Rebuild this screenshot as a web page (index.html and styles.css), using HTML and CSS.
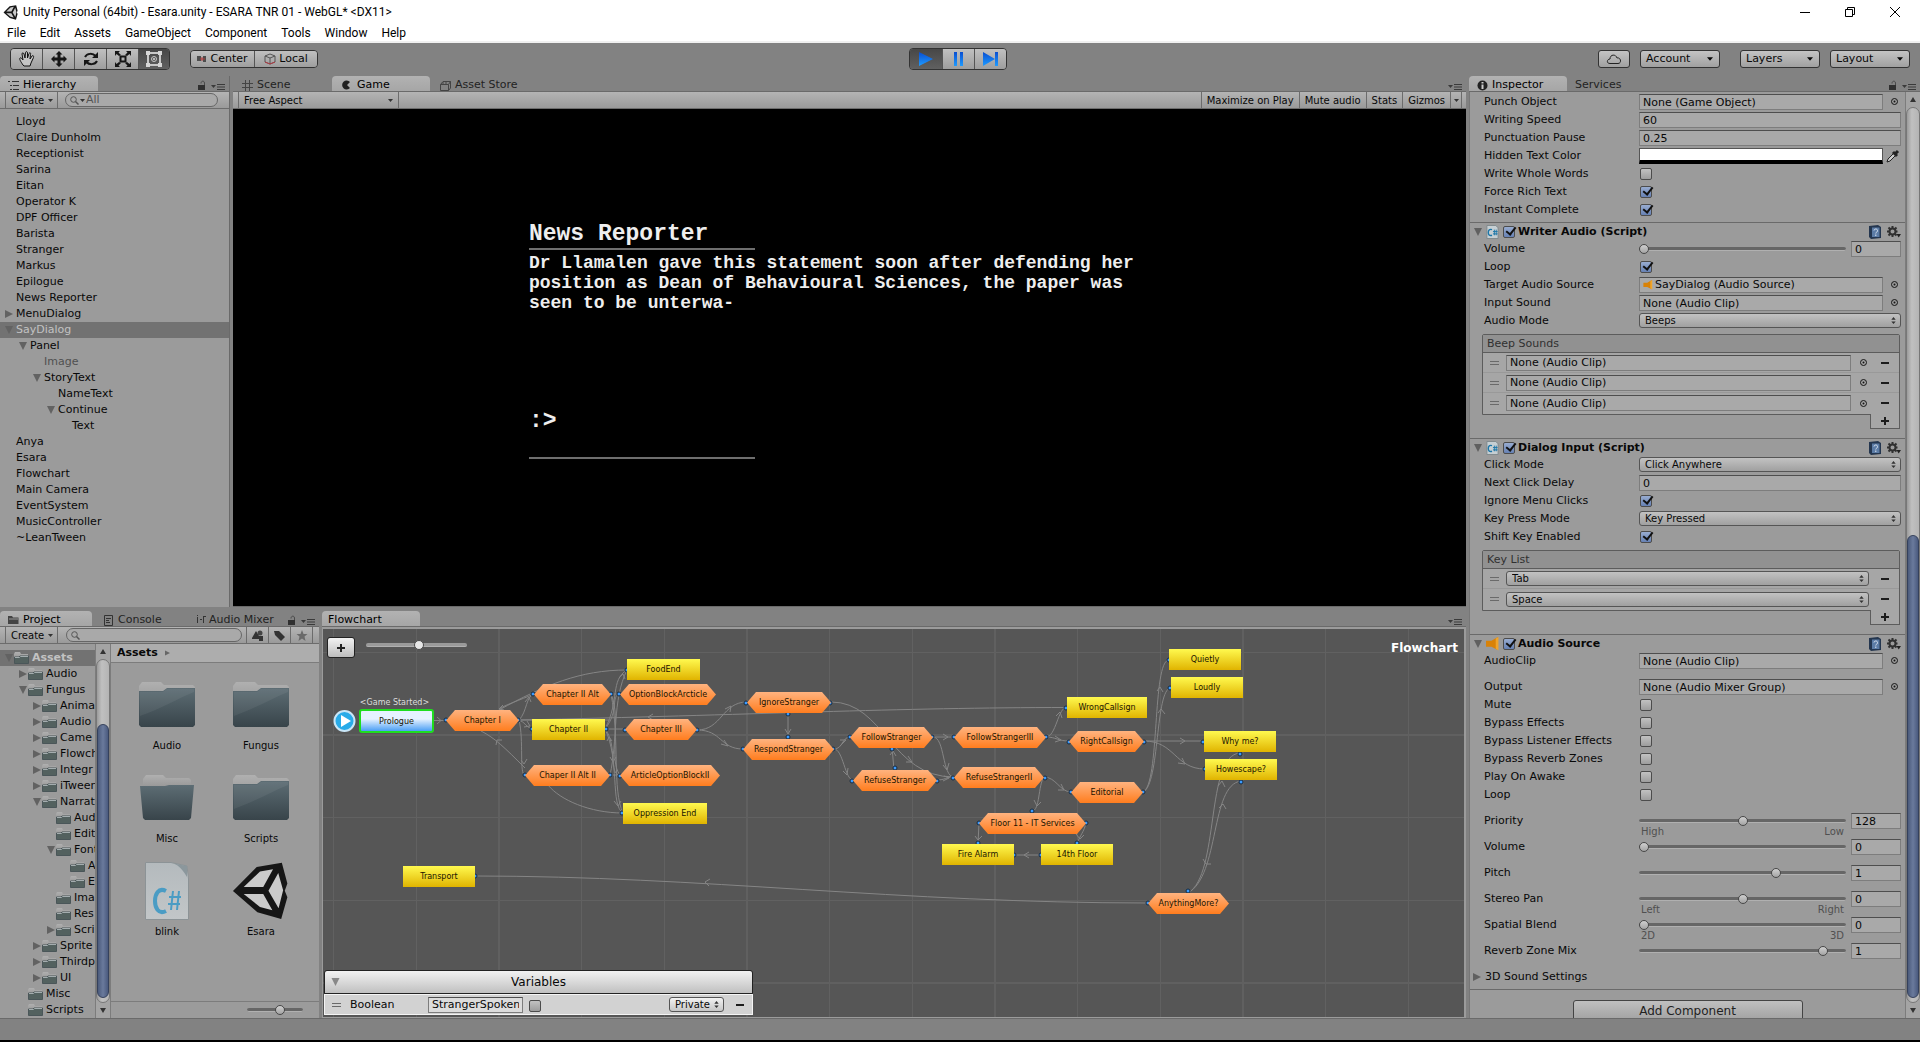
FILE: index.html
```html
<!DOCTYPE html>
<html lang="en">
<head>
<meta charset="utf-8">
<title>Unity Personal (64bit) - Esara.unity - ESARA TNR 01 - WebGL</title>
<link rel="stylesheet" href="styles.css">
</head>
<body>
<svg class="defs" aria-hidden="true">
  <defs>
    <linearGradient id="folderGrad" x1="0" y1="0" x2="0" y2="1"><stop offset="0" stop-color="#5d6d74"/><stop offset="1" stop-color="#38444a"/></linearGradient>
    <linearGradient id="tabGrad" x1="0" y1="0" x2="0" y2="1"><stop offset="0" stop-color="#b0b0b0"/><stop offset="1" stop-color="#858585"/></linearGradient>
    <linearGradient id="blueGrad" x1="0" y1="0" x2="0" y2="1"><stop offset="0" stop-color="#0a4ed0"/><stop offset="1" stop-color="#1e9bff"/></linearGradient>
    <linearGradient id="docGrad" x1="0" y1="0" x2="0" y2="1"><stop offset="0" stop-color="#b4babd"/><stop offset="1" stop-color="#c2c6c8"/></linearGradient>
    <symbol id="down" viewBox="0 0 8 8"><path d="M0 0H8L4 8Z" fill="currentColor"/></symbol>
    <symbol id="right" viewBox="0 0 8 8"><path d="M0 0V8L8 4Z" fill="currentColor"/></symbol>
    <symbol id="caret" viewBox="0 0 5 3"><path d="M0 0H5L2.5 3Z" fill="currentColor"/></symbol>
    <symbol id="updown" viewBox="0 0 5 8"><path d="M0 3H5L2.5 0ZM0 5H5L2.5 8Z" fill="currentColor"/></symbol>
    <symbol id="lock" viewBox="0 0 8 10"><path d="M0 5H7V10H0Z" fill="#303030"/><path d="M3 3.5C3 .5 6.5 .5 6.5 3V5" fill="none" stroke="#4a4a4a"/></symbol>
    <symbol id="panemenu" viewBox="0 0 14 6"><path d="M0 1H5L2.500 4Z" fill="#3a3a3a"/><path d="M6 .5H14M6 3H14M6 5.500H14" stroke="#3a3a3a"/></symbol>
    <symbol id="minifolder" viewBox="0 0 15 12"><path d="M0 11V2L1 0H6L7 2H14V5H0Z" fill="url(#tabGrad)"/><path d="M.5 5H5L6 4H14.500V11.500H.5Z" fill="#53615f" stroke="#4a5659"/><path d="M1 5.500H5.500L6.500 4.500H14" stroke="#a4adaf" fill="none"/></symbol>
    <symbol id="folder" viewBox="0 0 64 64"><path d="M4 48V13L7 9H26L29 12H58L60 14V20H4Z" fill="url(#tabGrad)"/><path d="M4 18H28L32 15H60V52L58 54H6L4 52Z" fill="url(#folderGrad)"/><path d="M5 43V19H28L32 16H59V19C44 25 25 36 5 43Z" fill="#fff" opacity=".06"/></symbol>
    <symbol id="openfolder" viewBox="0 0 64 64"><path d="M8 30V13L11 9H28L31 12H54L56 14V30Z" fill="url(#tabGrad)"/><path d="M5 20H30L34 19H59L56 52L54 54H10L8 52Z" fill="url(#folderGrad)"/></symbol>
    <symbol id="unity" viewBox="692 784 172 178"><path d="M695 873L768 799 845 786 862 850 854 872 862 892 843 959 770 938Z" fill="#161616"/><path d="M728 861L778 813 818 806 788 861ZM728 882H788L816 932 778 922ZM804 872L834 818 849 871 835 926Z" fill="#cbcbcb"/></symbol>
    <symbol id="target" viewBox="0 0 9 9"><circle cx="4.500" cy="4.500" r="3" fill="none" stroke="#151515"/><circle cx="4.500" cy="4.500" r="1" fill="#151515"/></symbol>
    <symbol id="book" viewBox="0 0 13 14"><path d="M1 1L10 0 13 2V13L3 14 1 12Z" fill="#24364f"/><path d="M4 2.500H11.500V12H4Z" fill="#5c7ca6"/><path d="M6 5.500C6 3.500 9.500 3.500 9.500 5.500S7.800 7 7.800 8.500M7.800 9.500V11" stroke="#dce6f2" fill="none"/></symbol>
    <symbol id="gear" viewBox="0 0 14 12"><circle cx="5.500" cy="5.500" r="3" fill="none" stroke="#303030" stroke-width="2"/><path d="M5.500 0V2M5.500 9V11M0 5.500H2M9 5.500H10.500M1.500 1.500L3 3M8 8L9.500 9.500M1.500 9.500L3 8M8 3L9.500 1.500" stroke="#303030" stroke-width="2"/><path d="M9.500 8H14L11.700 11.500Z" fill="#222"/></symbol>
    <symbol id="speaker" viewBox="0 0 12 13"><path d="M0 3.500H5L11 0V12L5 9H0Z" fill="#d98207"/><path d="M9 1.500L11.500 0V12.500L9 11Z" fill="#f0a52c"/></symbol>
    <symbol id="csfile" viewBox="0 0 13 15"><path d="M.5 .5H10L12.500 3V14.500H.5Z" fill="#c6cfd3" stroke="#7d868a"/><path d="M6 5C3 4 2 6 2 8S3 12 6 11" stroke="#1c76a8" stroke-width="1.500" fill="none"/><path d="M8.500 5V11M10.500 5V11M7 7H12M7 9.500H12" stroke="#1c76a8"/></symbol>
    <symbol id="search" viewBox="0 0 9 9"><circle cx="3.500" cy="3.500" r="2.800" fill="none" stroke="#555"/><path d="M5.500 5.500L8.500 8.500" stroke="#555" stroke-width="1.500"/></symbol>
    <pattern id="grid" x="10" y="23" width="248" height="248" patternUnits="userSpaceOnUse"><path d="M.5 0V248M83.500 0V248M0 .5H248M0 165.500H248" stroke="#616161"/><path d="M166 0V248M0 83H248" stroke="#606060" stroke-width="2"/></pattern>
  </defs>
</svg>

<header class="titlebar">
  <svg class="ic15"><use href="#unity"/></svg>
  <h1>Unity Personal (64bit) - Esara.unity - ESARA TNR 01 - WebGL* &lt;DX11&gt;</h1>
  <div class="winbtns">
    <button aria-label="Minimize"><svg width="12" height="12"><path d="M1 6.500H11" stroke="#000"/></svg></button>
    <button aria-label="Restore"><svg width="12" height="12"><path d="M1.500 3.500H8.500V10.500H1.500ZM3.500 3V1.500H10.500V8.500H9" fill="none" stroke="#000"/></svg></button>
    <button aria-label="Close"><svg width="12" height="12"><path d="M1 1L11 11M11 1L1 11" stroke="#000"/></svg></button>
  </div>
</header>
<nav class="menubar">
  <a href="#">File</a><a href="#">Edit</a><a href="#">Assets</a><a href="#">GameObject</a><a href="#">Component</a><a href="#">Tools</a><a href="#">Window</a><a href="#">Help</a>
</nav>

<div class="toolbar">
  <div class="side">
    <div class="group tools">
      <button aria-label="Hand"><svg width="18" height="18"><path d="M5 15C3 12 1 9 2 8S4 9 5 10L4 4C4 2.500 5.500 2.500 6 4L7 8 7.500 2.500C8 1 9.500 1.500 9.500 3V8L11 3.500C12 2 13 3 12.500 4.500L12 9 14 6C15 5 16 6 15.500 7.500L13 13 12 16H6Z" fill="#c4c4c4" stroke="#111"/></svg></button>
      <button aria-label="Move"><svg width="18" height="18"><path d="M9 1L12.500 4.500H10.500V7.500H13.500V5.500L17 9 13.500 12.500V10.500H10.500V13.500H12.500L9 17 5.500 13.500H7.500V10.500H4.500V12.500L1 9 4.500 5.500V7.500H7.500V4.500H5.500Z" fill="#161616"/></svg></button>
      <button aria-label="Rotate"><svg width="18" height="18"><path d="M3 7C5 3 11 3 13.500 6M15 11C13 15 7 15 4.500 12" stroke="#161616" stroke-width="2" fill="none"/><path d="M16 2V8H10ZM2 16V10H8Z" fill="#161616"/></svg></button>
      <button aria-label="Scale"><svg width="18" height="18"><path d="M6.500 6.500H11.500V11.500H6.500Z" fill="none" stroke="#161616" stroke-width="2"/><path d="M1 1H6L4.500 2.500 7 5 5 6 2.500 4 1 6ZM17 1H12L13.500 2.500 11 5 13 6 15.500 4 17 6ZM1 17H6L4.500 15.500 7 13 5 12 2.500 14 1 12ZM17 17H12L13.500 15.500 11 13 13 12 15.500 14 17 12Z" fill="#161616"/></svg></button>
      <button class="on" aria-label="Rect"><svg width="18" height="18"><path d="M3 3H15V15H3Z" fill="none" stroke="#c8c8c8" stroke-width="2"/><path d="M1 1H5V5H1ZM13 1H17V5H13ZM1 13H5V17H1ZM13 13H17V17H13Z" fill="#d6d6d6"/><circle cx="9" cy="9" r="2.500" fill="none" stroke="#c8c8c8"/><circle cx="9" cy="9" r="1" fill="#ddd"/></svg></button>
    </div>
    <div class="group pivot">
      <button><svg width="10" height="8"><path d="M0 1H4V6H0ZM6 1H9V7H6Z" fill="#4d4d4d"/><path d="M3 4H8M5 2V6" stroke="#b03a3a"/></svg>Center</button>
      <button><svg width="12" height="12"><path d="M1 3L6 1 11 3V9L6 11 1 9ZM1 3L6 5 11 3M6 5V11" fill="none" stroke="#555"/><path d="M1 9L6 11 11 9" fill="none" stroke="#b23a44"/></svg>Local</button>
    </div>
  </div>
  <div class="group play">
    <button class="on" aria-label="Play"><svg width="18" height="16"><path d="M2 1L16 8 2 15Z" fill="url(#blueGrad)"/></svg></button>
    <button aria-label="Pause"><svg width="18" height="16"><path d="M4 1H7V15H4ZM10 1H13V15H10Z" fill="url(#blueGrad)"/></svg></button>
    <button aria-label="Step"><svg width="18" height="16"><path d="M1 1L13 8V1H16V15H13V8L1 15Z" fill="url(#blueGrad)"/></svg></button>
  </div>
  <div class="side right">
    <button class="drop cloud" aria-label="Cloud"><svg width="16" height="12"><path d="M4 10.500C0 10.500 1 6 4 6C4 1 10 1 11 5C15 4 16 10.500 12 10.500Z" fill="none" stroke="#222"/></svg></button>
    <button class="drop gap2">Account<svg class="c6"><use href="#caret"/></svg></button>
    <button class="drop">Layers<svg class="c6"><use href="#caret"/></svg></button>
    <button class="drop">Layout<svg class="c6"><use href="#caret"/></svg></button>
  </div>
</div>

<main class="workspace">
  <div class="stage">
    <div class="row top">
      <section class="pane hierarchy">
        <div class="tabs">
          <div class="tab active"><svg class="ti"><path d="M0 1.500H2M4 1.500H11M2 5.500H4M5 5.500H11M2 9.500H4M5 9.500H11" stroke="#333"/></svg>Hierarchy</div>
          <div class="tabend"><svg class="lk"><use href="#lock"/></svg><svg class="pm"><use href="#panemenu"/></svg></div>
        </div>
        <div class="bar">
          <button class="seg create">Create<svg class="c5"><use href="#caret"/></svg></button>
          <label class="find"><svg class="s9"><use href="#search"/></svg><svg class="c5"><use href="#caret"/></svg><input type="text" placeholder="All" aria-label="Search hierarchy"></label>
        </div>
        <ul class="tree">
          <li>Lloyd</li><li>Claire Dunholm</li><li>Receptionist</li><li>Sarina</li><li>Eitan</li><li>Operator K</li><li>DPF Officer</li><li>Barista</li><li>Stranger</li><li>Markus</li><li>Epilogue</li><li>News Reporter</li>
          <li><svg><use href="#right"/></svg>MenuDialog</li>
          <li class="sel"><svg><use href="#down"/></svg>SayDialog</li>
          <li class="l1"><svg><use href="#down"/></svg>Panel</li>
          <li class="l2 off">Image</li>
          <li class="l2"><svg><use href="#down"/></svg>StoryText</li>
          <li class="l3">NameText</li>
          <li class="l3"><svg><use href="#down"/></svg>Continue</li>
          <li class="l4">Text</li>
          <li>Anya</li><li>Esara</li><li>Flowchart</li><li>Main Camera</li><li>EventSystem</li><li>MusicController</li><li>~LeanTween</li>
        </ul>
      </section>

      <section class="pane game">
        <div class="tabs">
          <div class="tab scene"><svg class="ti"><path d="M3.500 0V11M7.500 0V11M0 3.500H11M0 7.500H11" stroke="#444"/></svg>Scene</div>
          <div class="tab active"><svg class="ti"><path d="M8 2A4.500 4.500 0 1 0 8 8L5 5Z" fill="#222"/></svg>Game</div>
          <div class="tab"><svg class="ti"><path d="M.5 4.500H8.500V10.500H.5ZM.5 4.500L3 1.500H10.500V8L8.500 10.500M8.500 4.500L10.500 1.500M3 4V2M6 4V2" fill="none" stroke="#444"/></svg>Asset Store</div>
          <div class="tabend"><svg class="pm"><use href="#panemenu"/></svg></div>
        </div>
        <div class="bar">
          <button class="seg aspect">Free Aspect<svg class="c5"><use href="#caret"/></svg></button>
          <span class="grow"></span>
          <button class="seg">Maximize on Play</button><button class="seg">Mute audio</button><button class="seg">Stats</button><button class="seg">Gizmos</button><button class="seg tiny" aria-label="Gizmo options"><svg class="c5"><use href="#caret"/></svg></button>
        </div>
        <div class="screen">
          <h2>News Reporter</h2>
          <hr>
          <p>Dr Llamalen gave this statement soon after defending her<br>position as Dean of Behavioural Sciences, the paper was<br>seen to be unterwa-</p>
          <div class="prompt">:&gt;</div>
          <hr>
        </div>
      </section>
    </div>

    <div class="row bottom">
      <section class="pane project">
        <div class="tabs">
          <div class="tab active"><svg class="ti"><path d="M0 9V1H4L5 2.500H10.500V9Z" fill="#444"/><path d="M1 4H10" stroke="#999"/></svg>Project</div>
          <div class="tab console"><svg class="ti"><path d="M.5 .5H8.500V10.500H.5ZM2 3.500H7M2 5.500H5M2 7.500H6" fill="none" stroke="#333"/></svg>Console</div>
          <div class="tab mixer"><svg class="ti"><path d="M1.500 3V9M1.500 1V2M4 5.500H6M7.500 3V9M7 2.500H10" stroke="#333" fill="none"/></svg>Audio Mixer</div>
          <div class="tabend"><svg class="lk"><use href="#lock"/></svg><svg class="pm"><use href="#panemenu"/></svg></div>
        </div>
        <div class="bar">
          <button class="seg create">Create<svg class="c5"><use href="#caret"/></svg></button>
          <label class="find wide"><svg class="s9"><use href="#search"/></svg><input type="text" aria-label="Search project"></label>
          <button class="seg pic" aria-label="Filter by type"><svg width="12" height="12"><path d="M0 8L4 1 7 6V9H0ZM7 6H11V11H7Z" fill="#333"/><circle cx="8" cy="3" r="2.500" fill="#444"/></svg></button>
          <button class="seg pic" aria-label="Filter by label"><svg width="12" height="12"><path d="M0 1H5L11 7 7 11 1 5Z" fill="#333"/></svg></button>
          <button class="seg pic" aria-label="Favourites"><svg width="12" height="12"><path d="M6 0L7.500 4H11.500L8.500 6.500 9.500 11 6 8.500 2.500 11 3.500 6.500 .5 4H4.500Z" fill="#6a6a6a"/></svg></button>
        </div>
        <div class="split">
          <ul class="tree files">
            <li class="sel bold"><svg><use href="#down"/></svg><svg class="mf"><use href="#minifolder"/></svg>Assets</li>
            <li class="l1"><svg><use href="#right"/></svg><svg class="mf"><use href="#minifolder"/></svg>Audio</li>
            <li class="l1"><svg><use href="#down"/></svg><svg class="mf"><use href="#minifolder"/></svg>Fungus</li>
            <li class="l2"><svg><use href="#right"/></svg><svg class="mf"><use href="#minifolder"/></svg>Anima</li>
            <li class="l2"><svg><use href="#right"/></svg><svg class="mf"><use href="#minifolder"/></svg>Audio</li>
            <li class="l2"><svg><use href="#right"/></svg><svg class="mf"><use href="#minifolder"/></svg>Came</li>
            <li class="l2"><svg><use href="#right"/></svg><svg class="mf"><use href="#minifolder"/></svg>Flowch</li>
            <li class="l2"><svg><use href="#right"/></svg><svg class="mf"><use href="#minifolder"/></svg>Integr</li>
            <li class="l2"><svg><use href="#right"/></svg><svg class="mf"><use href="#minifolder"/></svg>iTween</li>
            <li class="l2"><svg><use href="#down"/></svg><svg class="mf"><use href="#minifolder"/></svg>Narrat</li>
            <li class="l3"><svg class="mf"><use href="#minifolder"/></svg>Aud</li>
            <li class="l3"><svg class="mf"><use href="#minifolder"/></svg>Edit</li>
            <li class="l3"><svg><use href="#down"/></svg><svg class="mf"><use href="#minifolder"/></svg>Font</li>
            <li class="l4"><svg class="mf"><use href="#minifolder"/></svg>A</li>
            <li class="l4"><svg class="mf"><use href="#minifolder"/></svg>E</li>
            <li class="l3"><svg class="mf"><use href="#minifolder"/></svg>Ima</li>
            <li class="l3"><svg class="mf"><use href="#minifolder"/></svg>Res</li>
            <li class="l3"><svg><use href="#right"/></svg><svg class="mf"><use href="#minifolder"/></svg>Scri</li>
            <li class="l2"><svg><use href="#right"/></svg><svg class="mf"><use href="#minifolder"/></svg>Sprite</li>
            <li class="l2"><svg><use href="#right"/></svg><svg class="mf"><use href="#minifolder"/></svg>Thirdp</li>
            <li class="l2"><svg><use href="#right"/></svg><svg class="mf"><use href="#minifolder"/></svg>UI</li>
            <li class="l1"><svg class="mf"><use href="#minifolder"/></svg>Misc</li>
            <li class="l1"><svg class="mf"><use href="#minifolder"/></svg>Scripts</li>
          </ul>
          <div class="scroll projscroll"><i class="arrow up"></i><div class="track"><div class="thumb"></div></div><i class="arrow"></i></div>
          <div class="browser">
            <div class="crumb">Assets<svg><use href="#right"/></svg></div>
            <div class="assets">
              <figure><svg><use href="#folder"/></svg><figcaption>Audio</figcaption></figure>
              <figure><svg><use href="#folder"/></svg><figcaption>Fungus</figcaption></figure>
              <figure><svg><use href="#openfolder"/></svg><figcaption>Misc</figcaption></figure>
              <figure><svg><use href="#folder"/></svg><figcaption>Scripts</figcaption></figure>
              <figure><svg viewBox="0 0 64 64"><path d="M10.500 3.500H36L52 7L53.500 20V60.500H10.500Z" fill="url(#docGrad)" stroke="#8c9396"/><path d="M36 4C42 5 46 8 52 18V7Z" fill="#8b979c"/><path d="M31 32C23 28 20 36 20 42S23 56 31 52" fill="none" stroke="#4a9cc4" stroke-width="4"/><path d="M38 32L36 51M44 32L42 51M34 38H46M33 45H45" stroke="#4a9cc4" stroke-width="2"/></svg><figcaption>blink</figcaption></figure>
              <figure><svg viewBox="-2 -3 64 64"><use href="#unity" width="58" height="58"/></svg><figcaption>Esara</figcaption></figure>
            </div>
            <div class="foot"><input type="range" aria-label="Icon size" value="60"></div>
          </div>
        </div>
      </section>

      <section class="pane flow">
        <div class="tabs">
          <div class="tab active">Flowchart</div>
          <div class="tabend"><svg class="pm"><use href="#panemenu"/></svg></div>
        </div>
        <div class="canvas">
          <svg class="wires">
            <rect width="100%" height="100%" fill="url(#grid)"/>
            <g transform="translate(-323 -629)" fill="none" stroke="#858585">
              <path d="M434 720.500H446M627 670C580 670 545 685 499 710M534 694C520 700 505 705 499 709M525 768C505 748 495 738 481 731M623 813C590 813 560 800 548 785M519 720C525 722 527 728 532 729M519 720C527 712 526 696 534 694M519 720C524 740 519 775 525 775M519 720H610M605 729H625M605 729C620 700 610 680 627 670M605 729C620 710 610 696 620 694M605 729C618 745 608 775 620 775M605 729C620 760 610 805 623 813M611 694H620M611 694C622 720 608 760 620 775M610 775H620M610 775C618 740 612 700 627 670M611 694C620 740 612 790 623 813M697 730C722 730 722 702 747 702M697 730C722 730 720 749 743 749M1067 707.500C900 707.500 750 715 519 720"/>
              <path d="M788 713V739M831 702C885 702 890 777 954 777M834 749C843 749 842 737 850 737M834 749C843 749 845 780 853 780M894 770L892 747M933 737H954M933 737C945 737 942 777 954 777M937 780C945 780 946 777 954 777M1046 737C1056 737 1058 707 1067 707M1046 737C1056 737 1058 741 1069 741M1044 777C1056 777 1060 792 1071 792M1044 777C1038 785 1040 811 1032 811M979 823L978 844M1086 823C1084 832 1080 835 1077 844M1041 855H1014"/>
              <path d="M1144 741H1204M1144 741C1175 741 1175 769 1205 769M1143 792C1160 785 1152 660 1169 660M1143 792C1160 785 1155 688 1171 688M1188 893C1220 875 1205 755 1240 753M1188 893C1220 875 1210 785 1241 781M1148 903C900 903 700 876 475 876"/>
              <path d="M437 717L441 720.500 437 724M503 705L499 709 504 710M496 745L497 740 502 740M525 702L529 697 531 702M524 727L530 726 527 721M521 760L524 764 527 759M607 741L609 737 612 741M610 757L613 762 616 757M619 678L623 674 625 679M614 801L618 806 621 801M653 714L648 717 653 720M725 709L731 706 730 712M721 744L728 746 724 740M785 729L788 734 791 729M840 746L846 740 840 740M843 771L847 775 848 768M908 756L912 762 906 762M890 755L893 751 896 756M943 734L948 737 943 740M943 765L947 770 949 763M943 781L949 778 944 776M1056 716L1060 712 1062 718M1055 736L1061 740 1055 742M1058 790L1064 790 1061 784M1034 800L1037 806 1041 802M975 836L978 840 982 836M1076 834L1080 839 1084 835M1029 852L1024 855 1029 858M1180 738L1185 741 1180 744M1178 763L1185 764 1182 758M1157 691L1160 687 1163 692M1158 713L1161 709 1165 714M1218 786L1222 781 1225 787M1219 808L1223 804 1226 809M1203 859L1206 864 1211 864M710 879L705 882 709 886"/>
            </g>
            <g transform="translate(-323 -629)">
              <g fill="#3a9bff" stroke="#17293d">
                <circle cx="446" cy="720" r="2"/><circle cx="518" cy="720" r="2"/><circle cx="533" cy="694" r="2"/><circle cx="611" cy="694" r="2"/><circle cx="619" cy="694" r="2"/><circle cx="627" cy="670" r="2"/><circle cx="532" cy="729" r="2"/><circle cx="606" cy="729" r="2"/><circle cx="625" cy="730" r="2"/><circle cx="697" cy="730" r="2"/><circle cx="525" cy="775" r="2"/><circle cx="610" cy="775" r="2"/><circle cx="620" cy="776" r="2"/><circle cx="622" cy="813" r="2"/><circle cx="475" cy="876" r="2"/><circle cx="746" cy="703" r="2"/><circle cx="830" cy="703" r="2"/><circle cx="788" cy="714" r="2"/><circle cx="788" cy="737" r="2"/><circle cx="743" cy="749" r="2"/><circle cx="833" cy="749" r="2"/><circle cx="850" cy="737" r="2"/><circle cx="932" cy="737" r="2"/><circle cx="892" cy="749" r="2"/><circle cx="895" cy="768" r="2"/><circle cx="852" cy="781" r="2"/><circle cx="937" cy="781" r="2"/><circle cx="954" cy="737" r="2"/><circle cx="1046" cy="737" r="2"/><circle cx="953" cy="778" r="2"/><circle cx="1045" cy="778" r="2"/><circle cx="1032" cy="811" r="2"/><circle cx="979" cy="823" r="2"/><circle cx="1086" cy="823" r="2"/><circle cx="978" cy="843" r="2"/><circle cx="1077" cy="843" r="2"/><circle cx="1014" cy="855" r="2"/><circle cx="1041" cy="855" r="2"/><circle cx="1066" cy="708" r="2"/><circle cx="1069" cy="742" r="2"/><circle cx="1144" cy="742" r="2"/><circle cx="1071" cy="792" r="2"/><circle cx="1143" cy="792" r="2"/><circle cx="1169" cy="660" r="2"/><circle cx="1170" cy="688" r="2"/><circle cx="1203" cy="742" r="2"/><circle cx="1205" cy="769" r="2"/><circle cx="1240" cy="754" r="2"/><circle cx="1241" cy="782" r="2"/><circle cx="1188" cy="891" r="2"/><circle cx="1148" cy="903" r="2"/>
              </g>
              <circle cx="344.500" cy="721" r="10" fill="#29abe8" stroke="#c9e6f7" stroke-width="2"/><path d="M341 715L351 721 341 727Z" fill="#fff"/>
            </g>
          </svg>
          <span class="event" style="left:36px;top:69px;width:71px">&lt;Game Started&gt;</span>
          <div class="node start" style="left:36px;top:80px;width:75px">Prologue</div>
          <div class="node hex" style="left:123px;top:81px;width:73px">Chapter I</div>
          <div class="node hex" style="left:211px;top:55px;width:77px">Chapter II Alt</div>
          <div class="node" style="left:304px;top:30px;width:73px">FoodEnd</div>
          <div class="node hex" style="left:297px;top:55px;width:96px">OptionBlockArcticle</div>
          <div class="node" style="left:209px;top:90px;width:73px">Chapter II</div>
          <div class="node hex" style="left:302px;top:90px;width:72px">Chapter III</div>
          <div class="node hex" style="left:202px;top:136px;width:85px">Chaper II Alt II</div>
          <div class="node hex" style="left:297px;top:136px;width:100px">ArticleOptionBlockII</div>
          <div class="node" style="left:300px;top:174px;width:84px">Oppression End</div>
          <div class="node" style="left:80px;top:237px;width:72px">Transport</div>
          <div class="node hex" style="left:424px;top:63px;width:84px">IgnoreStranger</div>
          <div class="node hex" style="left:420px;top:110px;width:91px">RespondStranger</div>
          <div class="node hex" style="left:527px;top:98px;width:83px">FollowStranger</div>
          <div class="node hex" style="left:530px;top:141px;width:84px">RefuseStranger</div>
          <div class="node hex" style="left:631px;top:98px;width:92px">FollowStrangerIII</div>
          <div class="node hex" style="left:631px;top:138px;width:90px">RefuseStrangerII</div>
          <div class="node hex" style="left:656px;top:184px;width:107px">Floor 11 - IT Services</div>
          <div class="node" style="left:619px;top:215px;width:72px">Fire Alarm</div>
          <div class="node" style="left:718px;top:215px;width:72px">14th Floor</div>
          <div class="node" style="left:744px;top:68px;width:80px">WrongCallsign</div>
          <div class="node hex" style="left:746px;top:102px;width:75px">RightCallsign</div>
          <div class="node hex" style="left:748px;top:153px;width:72px">Editorial</div>
          <div class="node" style="left:846px;top:20px;width:72px">Quietly</div>
          <div class="node" style="left:848px;top:48px;width:72px">Loudly</div>
          <div class="node" style="left:881px;top:102px;width:72px">Why me?</div>
          <div class="node" style="left:882px;top:130px;width:72px">Howescape?</div>
          <div class="node hex" style="left:825px;top:264px;width:81px">AnythingMore?</div>
          <div class="controls">
            <button class="add" aria-label="Add block"><svg width="10" height="10"><path d="M5 1V9M1 5H9" stroke="#222" stroke-width="2"/></svg></button>
            <input type="range" aria-label="Zoom" value="53">
            <strong>Flowchart</strong>
          </div>
          <div class="vars">
            <div class="varhead"><svg><use href="#down"/></svg>Variables</div>
            <div class="varrow"><i class="grip"></i><label for="vn">Boolean</label><input id="vn" class="field" type="text" value="StrangerSpoken"><input type="checkbox" aria-label="StrangerSpoken value"><span class="pick"><select aria-label="Scope"><option>Private</option></select><svg><use href="#updown"/></svg></span><button class="minus" aria-label="Remove variable"></button></div>
          </div>
        </div>
      </section>
    </div>
  </div>

  <section class="pane inspector">
    <div class="tabs">
      <div class="tab active"><svg class="ti"><circle cx="5.500" cy="5.500" r="5" fill="#222"/><path d="M5.500 4.500V9M5.500 2V3.500" stroke="#ccc" stroke-width="2"/></svg>Inspector</div>
      <div class="tab">Services</div>
      <div class="tabend"><svg class="lk"><use href="#lock"/></svg><svg class="pm"><use href="#panemenu"/></svg></div>
    </div>
    <div class="insbody">
      <div class="props">
        <div class="comp">
          <div class="prop"><label for="p1">Punch Object</label><input id="p1" class="field" type="text" value="None (Game Object)"><svg class="tg"><use href="#target"/></svg></div>
          <div class="prop"><label for="p2">Writing Speed</label><input id="p2" class="field" type="text" value="60"></div>
          <div class="prop"><label for="p3">Punctuation Pause</label><input id="p3" class="field" type="text" value="0.25"></div>
          <div class="prop"><label for="p4">Hidden Text Color</label><button id="p4" class="swatch" aria-label="Hidden Text Color"></button><svg class="dropper"><path d="M1 13L2 10 8 4 10 6 4 12Z" fill="#ccc" stroke="#222"/><path d="M7 3L11 7M9 5L12 2" stroke="#222" stroke-width="3"/></svg></div>
          <div class="prop"><label for="p5">Write Whole Words</label><input id="p5" type="checkbox"></div>
          <div class="prop"><label for="p6">Force Rich Text</label><input id="p6" type="checkbox" checked></div>
          <div class="prop"><label for="p7">Instant Complete</label><input id="p7" type="checkbox" checked></div>
        </div>
        <div class="comp">
          <div class="head"><svg class="tri"><use href="#down"/></svg><svg class="hi"><use href="#csfile"/></svg><input id="c1" type="checkbox" checked><label for="c1">Writer Audio (Script)</label><svg class="bk"><use href="#book"/></svg><svg class="gr"><use href="#gear"/></svg></div>
          <div class="prop"><label for="w1">Volume</label><input type="range" id="w1" value="0"><input class="field num" type="text" value="0" aria-label="Volume value"></div>
          <div class="prop"><label for="w2">Loop</label><input id="w2" type="checkbox" checked></div>
          <div class="prop"><label for="w3">Target Audio Source</label><span class="field obj"><svg><use href="#speaker"/></svg><input id="w3" type="text" value="SayDialog (Audio Source)"></span><svg class="tg"><use href="#target"/></svg></div>
          <div class="prop"><label for="w4">Input Sound</label><input id="w4" class="field" type="text" value="None (Audio Clip)"><svg class="tg"><use href="#target"/></svg></div>
          <div class="prop"><label for="w5">Audio Mode</label><span class="pick"><select id="w5"><option>Beeps</option></select><svg><use href="#updown"/></svg></span></div>
          <div class="list">
            <h3>Beep Sounds</h3>
            <div class="item"><i class="grip"></i><input class="field" type="text" value="None (Audio Clip)" aria-label="Beep 1"><svg class="tg"><use href="#target"/></svg><button class="minus" aria-label="Remove"></button></div>
            <div class="item"><i class="grip"></i><input class="field" type="text" value="None (Audio Clip)" aria-label="Beep 2"><svg class="tg"><use href="#target"/></svg><button class="minus" aria-label="Remove"></button></div>
            <div class="item"><i class="grip"></i><input class="field" type="text" value="None (Audio Clip)" aria-label="Beep 3"><svg class="tg"><use href="#target"/></svg><button class="minus" aria-label="Remove"></button></div>
          </div>
          <button class="plus" aria-label="Add beep sound"></button>
        </div>
        <div class="comp">
          <div class="head"><svg class="tri"><use href="#down"/></svg><svg class="hi"><use href="#csfile"/></svg><input id="c2" type="checkbox" checked><label for="c2">Dialog Input (Script)</label><svg class="bk"><use href="#book"/></svg><svg class="gr"><use href="#gear"/></svg></div>
          <div class="prop"><label for="d1">Click Mode</label><span class="pick"><select id="d1"><option>Click Anywhere</option></select><svg><use href="#updown"/></svg></span></div>
          <div class="prop"><label for="d2">Next Click Delay</label><input id="d2" class="field" type="text" value="0"></div>
          <div class="prop"><label for="d3">Ignore Menu Clicks</label><input id="d3" type="checkbox" checked></div>
          <div class="prop"><label for="d4">Key Press Mode</label><span class="pick"><select id="d4"><option>Key Pressed</option></select><svg><use href="#updown"/></svg></span></div>
          <div class="prop"><label for="d5">Shift Key Enabled</label><input id="d5" type="checkbox" checked></div>
          <div class="list">
            <h3>Key List</h3>
            <div class="item"><i class="grip"></i><span class="pick"><select aria-label="Key 1"><option>Tab</option></select><svg><use href="#updown"/></svg></span><button class="minus" aria-label="Remove"></button></div>
            <div class="item"><i class="grip"></i><span class="pick"><select aria-label="Key 2"><option>Space</option></select><svg><use href="#updown"/></svg></span><button class="minus" aria-label="Remove"></button></div>
          </div>
          <button class="plus" aria-label="Add key"></button>
        </div>
        <div class="comp">
          <div class="head"><svg class="tri"><use href="#down"/></svg><svg class="hi"><use href="#speaker"/></svg><input id="c3" type="checkbox" checked><label for="c3">Audio Source</label><svg class="bk"><use href="#book"/></svg><svg class="gr"><use href="#gear"/></svg></div>
          <div class="prop tall"><label for="a1">AudioClip</label><input id="a1" class="field" type="text" value="None (Audio Clip)"><svg class="tg"><use href="#target"/></svg></div>
          <div class="prop"><label for="a2">Output</label><input id="a2" class="field" type="text" value="None (Audio Mixer Group)"><svg class="tg"><use href="#target"/></svg></div>
          <div class="prop"><label for="a3">Mute</label><input id="a3" type="checkbox"></div>
          <div class="prop"><label for="a4">Bypass Effects</label><input id="a4" type="checkbox"></div>
          <div class="prop"><label for="a5">Bypass Listener Effects</label><input id="a5" type="checkbox"></div>
          <div class="prop"><label for="a6">Bypass Reverb Zones</label><input id="a6" type="checkbox"></div>
          <div class="prop"><label for="a7">Play On Awake</label><input id="a7" type="checkbox"></div>
          <div class="prop tall"><label for="a8">Loop</label><input id="a8" type="checkbox"></div>
          <div class="prop tall"><label for="s1">Priority</label><input type="range" id="s1" value="50"><input class="field num" type="text" value="128" aria-label="Priority value"><div class="ends"><span>High</span><span>Low</span></div></div>
          <div class="prop tall"><label for="s2">Volume</label><input type="range" id="s2" value="0"><input class="field num" type="text" value="0" aria-label="Volume value"></div>
          <div class="prop tall"><label for="s3">Pitch</label><input type="range" id="s3" value="67"><input class="field num" type="text" value="1" aria-label="Pitch value"></div>
          <div class="prop tall"><label for="s4">Stereo Pan</label><input type="range" id="s4" value="50"><input class="field num" type="text" value="0" aria-label="Stereo pan value"><div class="ends"><span>Left</span><span>Right</span></div></div>
          <div class="prop tall"><label for="s5">Spatial Blend</label><input type="range" id="s5" value="0"><input class="field num" type="text" value="0" aria-label="Spatial blend value"><div class="ends"><span>2D</span><span>3D</span></div></div>
          <div class="prop tall"><label for="s6">Reverb Zone Mix</label><input type="range" id="s6" value="91"><input class="field num" type="text" value="1" aria-label="Reverb zone mix value"></div>
          <div class="fold"><svg class="tri"><use href="#right"/></svg>3D Sound Settings</div>
        </div>
        <div class="addcomp"><button>Add Component</button></div>
      </div>
      <div class="scroll insscroll"><i class="arrow up"></i><div class="track"><div class="thumb"></div></div><i class="arrow"></i></div>
    </div>
  </section>
</main>
<footer class="status"></footer>
</body>
</html>
```
FILE: styles.css
```css
* { box-sizing: border-box; }

body {
  margin: 0;
  height: 100vh;
  display: flex;
  flex-direction: column;
  overflow: hidden;
  background: #828282;
  color: #080808;
  font: 11px/16px "DejaVu Sans", sans-serif;
}

button, input, select { font: inherit; color: inherit; margin: 0; padding: 0; border: 0; background: none; }
input { min-width: 0; }
h1, h2, h3, p, ul, figure, hr { margin: 0; padding: 0; }
svg { flex: none; display: block; }
.defs { position: absolute; width: 0; height: 0; }

/* window chrome */
.titlebar {
  display: flex;
  align-items: center;
  height: 24px;
  padding: 0 3px;
  gap: 5px;
  background: #fff;
  color: #000;
}
.titlebar h1 { flex: 1; font: 12px/24px Roboto, sans-serif; }
.ic15 { width: 15px; height: 15px; }
.winbtns { display: flex; }
.winbtns button { width: 45px; height: 20px; display: flex; align-items: center; justify-content: center; }
.menubar {
  display: flex;
  gap: 14px;
  height: 19px;
  padding-left: 7px;
  background: #fff;
  border-bottom: 2px solid #f0f0f0;
  font: 12px/18px Roboto, sans-serif;
}
.menubar a { color: #000; text-decoration: none; }

/* main toolbar */
.toolbar { display: flex; align-items: center; height: 33px; padding: 0 10px 1px; flex: none; }
.side { flex: 1; display: flex; align-items: center; gap: 20px; }
.side.right { justify-content: flex-end; gap: 10px; }
.group { display: flex; border: 1px solid #333; border-radius: 4px; overflow: hidden; }
.play { margin-right: 4px; }
.group button {
  display: flex;
  align-items: center;
  justify-content: center;
  gap: 3px;
  width: 32px;
  height: 20px;
  background: linear-gradient(#c0c0c0, #9e9e9e);
}
.group button + button { border-left: 1px solid #555; }
.group button.on { background: linear-gradient(#474747, #606060); }
.tools button:first-child { width: 31px; }
.tools button:last-child { width: 31px; }
.pivot button { width: 63px; height: 16px; }
.drop {
  display: flex;
  align-items: center;
  justify-content: space-between;
  width: 80px;
  height: 18px;
  padding: 0 6px 0 5px;
  border: 1px solid #333;
  border-radius: 3px;
  background: linear-gradient(#c4c4c4, #a0a0a0);
}
.cloud { width: 32px; padding: 0 7px; }
.gap2 { margin-right: 10px; }
.c6 { width: 6px; height: 4px; }
.c5 { width: 5px; height: 3px; color: #333; }
.s9 { width: 9px; height: 9px; }

/* pane layout */
.workspace { flex: 1; min-height: 0; display: flex; gap: 3px; }
.stage { flex: 1; min-width: 0; display: flex; flex-direction: column; gap: 4px; }
.row { display: flex; min-height: 0; }
.top { flex: 1; gap: 3px; }
.bottom { height: 407px; gap: 3px; }
.pane { display: flex; flex-direction: column; min-width: 0; min-height: 0; }
.hierarchy { width: 230px; border-right: 1px solid #6a6a6a; }
.game, .flow { flex: 1; }
.project { width: 319px; }
.inspector { width: 451px; }

.tabs { display: flex; height: 16px; flex: none; color: #222; border-bottom: 1px solid #6a6a6a; }
.tab { display: flex; align-items: center; gap: 4px; padding: 3px 8px 0; white-space: nowrap; }
.tab.active {
  width: 98px;
  background: linear-gradient(#b2b2b2, #a6a6a6);
  border-radius: 4px 4px 0 0;
  color: #000;
}
.game .tab { padding-left: 10px; }
.game .scene { width: 99px; padding-left: 9px; }
.project .tab.active { width: 92px; }
.console { padding-left: 12px; width: 98px; gap: 3px; }
.mixer { padding: 2px 4px 0 6px; gap: 2px; }
.flow .tab.active { padding: 2px 0 0 6px; }
.ti { width: 11px; height: 11px; }
.tabend { margin-left: auto; display: flex; align-items: flex-end; gap: 5px; padding: 0 4px 1px 0; }
.lk { width: 8px; height: 10px; }
.pm { width: 14px; height: 6px; }

.bar {
  display: flex;
  height: 17px;
  flex: none;
  padding: 0 0 0 5px;
  background: linear-gradient(#b4b4b4, #9a9a9a);
  border-bottom: 1px solid #6c6c6c;
  font-size: 10px;
}
.seg {
  display: flex;
  align-items: center;
  gap: 4px;
  padding: 1px 5px 0;
  border-left: 1px solid #6c6c6c;
  white-space: nowrap;
}
.create { width: 53px; border-right: 1px solid #6c6c6c; }
.aspect { width: 161px; justify-content: space-between; border-right: 1px solid #6c6c6c; }
.tiny { width: 12px; padding: 0 3px; margin-right: 4px; border-right: 1px solid #6c6c6c; }
.grow { flex: 1; }
.pic { width: 22px; justify-content: center; }
.pic:last-child { width: 23px; border-right: 1px solid #6c6c6c; margin-right: 6px; }
.find {
  display: flex;
  align-items: center;
  gap: 1px;
  width: 153px;
  height: 14px;
  margin: 1px 0 0 7px;
  padding: 0 4px;
  border: 1px solid #666;
  border-radius: 7px;
  background: #a9a9a9;
}
.find input { flex: 1; font-size: 11px; height: 12px; }
.find input::placeholder { color: #555; opacity: 1; }
.find.wide { flex: 1; width: auto; margin: 1px 4px 0 8px; }

/* trees */
.tree {
  flex: 1;
  list-style: none;
  padding-top: 5px;
  background: #9b9b9b;
  overflow: hidden;
  white-space: nowrap;
}
.tree li { display: flex; align-items: center; height: 16px; padding-left: 16px; }
.tree li > svg:first-child:not(.mf) { width: 8px; height: 8px; margin: 0 3px 0 -11px; color: #626262; }
.tree .sel { background: #727272; color: #c2c2c2; }
.tree .sel > svg:first-child { color: #444; }
.tree .off { color: #505050; }
.tree .bold { font-weight: bold; }
.tree .l1 { padding-left: 30px; }
.tree .l2 { padding-left: 44px; }
.tree .l3 { padding-left: 58px; }
.tree .l4 { padding-left: 72px; }
.mf { width: 15px; height: 12px; margin: 0 3px 0 -2px; }
.files { flex: none; width: 95px; padding-top: 6px; }

/* scrollbars */
.scroll { display: flex; flex-direction: column; width: 15px; background: #a4a4a4; border-left: 1px solid #7c7c7c; }
.arrow { height: 15px; display: flex; align-items: center; justify-content: center; }
.arrow::before { content: ""; border: 3px solid transparent; border-top: 5px solid #333; border-bottom: 0; }
.arrow.up::before { border-top: 0; border-bottom: 5px solid #333; }
.track { flex: 1; display: flex; align-items: flex-end; padding-bottom: 4px; border: 1px solid #777; border-radius: 7px; background: linear-gradient(90deg, #9b9b9b, #c0c0c0 40%, #b4b4b4); }
.thumb { width: 100%; border-radius: 6px; background: linear-gradient(90deg, #4b5b7c, #6a7a9c 50%, #4a5a7e); border: 1px solid #35415c; }
.projscroll .thumb { height: 81%; }
.insscroll .thumb { height: 52%; }

/* game view */
.screen {
  flex: 1;
  padding: 112px 0 0 24%;
  background: #000;
  color: #eee;
  font: bold 18px/20px "Liberation Mono", monospace;
}
.game { border-bottom: 1px solid #6a6a6a; }
.screen h2 { font-size: 23px; line-height: 26px; }
.screen hr { width: 226px; height: 2px; border: 0; background: #6e6e6e; }
.screen h2 + hr { margin: 1px 0 3px; }
.prompt { margin: 94px 0 22px; font-size: 23px; line-height: 28px; }

/* project browser */
.split { flex: 1; display: flex; min-height: 0; }
.browser { flex: 1; display: flex; flex-direction: column; background: #9b9b9b; border-left: 1px solid #7c7c7c; }
.crumb { display: flex; align-items: center; gap: 7px; height: 19px; padding-left: 6px; background: #adadad; border-bottom: 1px solid #7c7c7c; font-weight: bold; }
.crumb svg { width: 5px; height: 6px; color: #666; }
.assets { flex: 1; display: grid; grid-template-columns: 64px 64px; align-content: start; gap: 12px 30px; padding: 10px 0 0 24px; font-size: 10px; line-height: 18px; }
.assets figure { height: 81px; text-align: center; }
.assets svg { width: 64px; height: 64px; }
.foot { height: 17px; padding: 0 16px; display: flex; justify-content: flex-end; align-items: center; border-top: 1px solid #7c7c7c; }

/* flowchart */
.canvas { position: relative; flex: 1; background: #565656; border: solid #9b9b9b; border-width: 2px 2px 1px 1px; overflow: hidden; }
.wires { position: absolute; inset: 0; width: 100%; height: 100%; }
.node {
  position: absolute;
  height: 21px;
  background: linear-gradient(#fff94f, #e0b400);
  color: #1a1400;
  font-size: 8px;
  line-height: 21px;
  text-align: center;
  white-space: nowrap;
}
.node.hex { background: linear-gradient(#ffb37f, #ff7d1e); clip-path: polygon(0 50%, 9px 0, calc(100% - 9px) 0, 100% 50%, calc(100% - 9px) 100%, 9px 100%); }
.node.start { height: 24px; border: 2px solid #1fdd1f; border-radius: 3px; background: linear-gradient(#e6f2ff 40%, #4b9ff5); }
.event { position: absolute; font-size: 8px; line-height: 10px; text-align: center; color: #ddd; white-space: nowrap; }
.controls { position: relative; display: flex; align-items: center; gap: 11px; padding: 8px 6px 0 4px; }
.controls strong { margin-left: auto; color: #fff; font-size: 12px; }
.add { width: 28px; height: 21px; display: flex; align-items: center; justify-content: center; border: 1px solid #222; border-radius: 3px; background: linear-gradient(#f2f2f2, #bdbdbd); }
.vars { position: absolute; left: 1px; bottom: 2px; width: 429px; }
.varhead { display: flex; align-items: center; justify-content: center; height: 24px; border: 1px solid #222; border-radius: 3px 3px 0 0; background: linear-gradient(#f2f2f2, #c0c0c0); font-size: 12px; position: relative; }
.varhead svg { position: absolute; left: 6px; width: 9px; height: 8px; color: #888; }
.varrow { display: flex; align-items: center; height: 21px; padding: 0 8px 0 7px; background: #d2d2d2; border: 1px solid #f4f4f4; }
.varrow label { width: 78px; margin-left: 2px; }
.varrow .field { flex: none; width: 95px; background: #dcdcdc; }
.varrow input[type=checkbox] { margin-left: 6px; }
.varrow .pick { flex: none; width: 55px; margin-left: auto; }
.varrow .minus { margin-left: 12px; }

/* inspector */
.insbody { flex: 1; display: flex; min-height: 0; }
.props { flex: 1; min-width: 0; background: #9b9b9b; border-left: 1px solid #777; overflow: hidden; display: flex; flex-direction: column; }
.comp { flex: none; padding: 0 4px 9px 14px; border-bottom: 1px solid #6a6a6a; }
.comp:first-child { padding: 2px 4px 2px 14px; }
.prop { position: relative; display: flex; height: 18px; align-items: flex-start; }
.prop.tall { height: 26px; }
.prop label { width: 155px; flex: none; white-space: nowrap; }
.field {
  flex: 1;
  min-width: 0;
  height: 16px;
  padding: 0 3px;
  background: #a9a9a9;
  border: 1px solid #7d7d7d;
  border-top-color: #4e4e4e;
  line-height: 14px;
}
.field.num { flex: none; width: 50px; }
.obj { display: flex; align-items: center; gap: 2px; }
.obj svg { width: 10px; height: 10px; }
.obj input { flex: 1; }
.tg { width: 9px; height: 9px; margin: 3px 2px 0 7px; }
.swatch { flex: 1; height: 16px; background: #fff; border: 1px solid #555; border-bottom: 4px solid #000; }
.dropper { width: 14px; height: 14px; margin: 1px 1px 0 3px; }
.ends { position: absolute; top: 11px; left: 157px; right: 57px; display: flex; justify-content: space-between; color: #505050; font-size: 10px; pointer-events: none; }

.head { display: flex; align-items: center; height: 18px; margin-left: -10px; font-weight: bold; }
.head label { flex: 1; margin-left: 3px; }
.tri { width: 8px; height: 8px; color: #606060; margin-right: 4px; }
.hi { width: 13px; height: 14px; margin-right: 4px; }
.bk { width: 13px; height: 14px; margin-right: 6px; }
.gr { width: 14px; height: 12px; }
.fold { display: flex; align-items: center; height: 16px; margin: 0 0 -5px -11px; }

input[type=checkbox] {
  appearance: none;
  flex: none;
  width: 12px;
  height: 12px;
  margin: 2px 0 0 1px;
  border: 1px solid #4c4c4c;
  border-radius: 2px;
  background: linear-gradient(#c2c2c2, #9d9d9d);
}
input[type=checkbox]:checked { background: linear-gradient(#98acd0, #6681b4); }
input[type=checkbox]:checked::before { content: ""; display: block; width: 4px; height: 8px; margin: -2px 0 0 4px; border: solid #111; border-width: 0 2px 2px 0; transform: rotate(38deg); }
.head input[type=checkbox] { margin: 0; }

input[type=range] { appearance: none; flex: none; width: 207px; height: 16px; margin-right: 5px; }
.foot input[type=range] { width: 56px; margin: 0; }
.controls input[type=range] { width: 101px; margin-top: -6px; }
input[type=range]::-webkit-slider-runnable-track { height: 4px; border-radius: 2px; background: #666; border-bottom: 1px solid #b0b0b0; }
input[type=range]::-webkit-slider-thumb { appearance: none; width: 10px; height: 10px; margin-top: -3px; border: 1px solid #484848; border-radius: 5px; background: linear-gradient(#cfcfcf, #a4a4a4); }
.controls input::-webkit-slider-runnable-track { background: #9a9a9a; }
.controls input::-webkit-slider-thumb { background: #e6e6e6; }

.pick { position: relative; flex: 1; height: 15px; }
.pick select { appearance: none; display: block; width: 100%; height: 15px; padding: 0 5px; border: 1px solid #555; border-radius: 3px; background: linear-gradient(#c2c2c2, #a0a0a0); font-size: 10px; line-height: 13px; }
.varrow .pick select { background: linear-gradient(#f2f2f2, #c6c6c6); }
.pick svg { position: absolute; right: 5px; top: 4px; width: 5px; height: 7px; color: #333; pointer-events: none; }

.list { margin: 3px 1px 0 -2px; border: 1px solid #5c5c5c; border-radius: 2px 2px 0 0; background: #a6a6a6; padding-bottom: 1px; }
.list h3 { height: 18px; padding-left: 4px; background: #919191; border-bottom: 1px solid #5c5c5c; font-size: 11px; font-weight: normal; line-height: 18px; color: #303030; }
.item { display: flex; height: 20px; align-items: center; padding: 0 10px 0 7px; border-bottom: 1px solid #999; }
.item:last-child { border-bottom: 0; }
.grip { width: 9px; height: 4px; border: solid #6a6a6a; border-width: 1px 0; margin-right: 7px; }
.item .tg { margin: 0 13px 0 8px; }
.item .pick + .minus { margin-left: 12px; }
.minus { width: 8px; height: 2px; background: #1c1c1c; }
.plus { display: block; width: 30px; height: 15px; margin: -1px 1px 0 auto; border: 1px solid #5c5c5c; border-top: 0; background: linear-gradient(#1c1c1c, #1c1c1c) center / 8px 2px no-repeat, linear-gradient(#1c1c1c, #1c1c1c) center / 2px 8px no-repeat, #a6a6a6; }
.addcomp { flex: none; display: flex; justify-content: center; padding-top: 10px; }
.addcomp button { width: 230px; height: 22px; border: 1px solid #444; border-radius: 3px; background: linear-gradient(#c0c0c0, #a0a0a0); font-size: 12px; color: #222; }

.status { height: 24px; flex: none; border-top: 1px solid #6a6a6a; border-bottom: 2px solid #000; }
```
